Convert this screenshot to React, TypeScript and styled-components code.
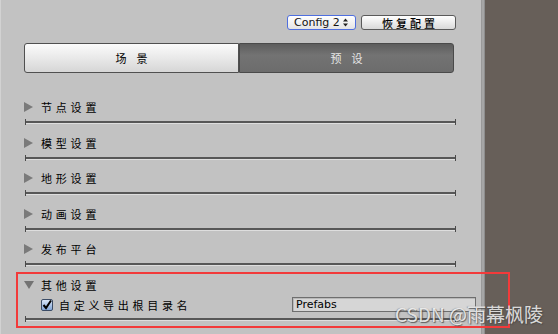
import styled, { createGlobalStyle } from 'styled-components'

const GlobalStyle = createGlobalStyle`
  html, body {
    margin: 0;
    padding: 0;
    width: 558px;
    height: 334px;
    overflow: hidden;
    background: #675f59;
  }
  * { box-sizing: border-box; }
`

const Page = styled.div`
  display: flex;
  width: 558px;
  height: 334px;
  font-family: 'Noto Sans CJK SC', 'DejaVu Sans', sans-serif;
  position: relative;
`

const Panel = styled.div`
  width: 481px;
  height: 100%;
  background: #c2c2c2;
  border-left: 1px solid #d2d2d2;
  display: flex;
  flex-direction: column;
  padding: 15px 27px 0 22px;
`

const Divider = styled.div`
  width: 4px;
  height: 100%;
  background: #a6a6a6;
  border-left: 1px solid #9a9a9a;
  border-right: 1px solid #8e8e8e;
`

const DarkSide = styled.div`
  flex: 1;
  background: #675f59;
`

const TopBar = styled.div`
  display: flex;
  justify-content: flex-end;
  gap: 5px;
  height: 15px;
  margin-right: -2px;
`

const Dropdown = styled.div`
  width: 69px;
  height: 15px;
  border: 1px solid #4f6fdf;
  border-radius: 3px;
  background: linear-gradient(#ffffff, #e4e4e4);
  display: flex;
  align-items: center;
  justify-content: space-between;
  padding: 0 7px 0 6px;
  font-family: 'DejaVu Sans', sans-serif;
  font-size: 11px;
  color: #111;
`

const Button = styled.div`
  width: 95px;
  height: 15px;
  border: 1px solid #5a5a5a;
  border-radius: 3px;
  background: linear-gradient(#ffffff, #d9d9d9);
  display: flex;
  align-items: center;
  justify-content: center;
  font-size: 11px;
  font-weight: 500;
  letter-spacing: 3px;
  padding-left: 3px;
  color: #000;
`

const Tabs = styled.div`
  display: flex;
  margin-top: 13px;
  height: 30px;
  margin-left: 1px;
`

const Tab = styled.div<{ $active?: boolean }>`
  flex: 1;
  display: flex;
  align-items: center;
  justify-content: center;
  font-size: 11px;
  letter-spacing: 10px;
  padding-left: 10px;
  border: 1px solid ${p => (p.$active ? '#4a4a4a' : '#505050')};
  background: ${p =>
    p.$active
      ? 'linear-gradient(#5d5d5d, #737373 40%, #6c6c6c)'
      : 'linear-gradient(#fbfbfb, #e9e9e9 50%, #d6d6d6)'};
  color: ${p => (p.$active ? '#e6e6e6' : '#000')};
  border-radius: ${p => (p.$active ? '0 3px 3px 0' : '3px 0 0 3px')};
`

const Sections = styled.div`
  display: flex;
  flex-direction: column;
  margin-top: 24px;
`

const Section = styled.div`
  display: flex;
  flex-direction: column;
  margin-bottom: 9.5px;
`

const Header = styled.div`
  display: flex;
  align-items: center;
  height: 20px;
  gap: 7px;
  margin-left: 1px;
  font-size: 11px;
  letter-spacing: 3.8px;
  color: #000;
`

const Triangle = styled.span<{ $open?: boolean }>`
  width: 0;
  height: 0;
  ${p =>
    p.$open
      ? `border-left: 5px solid transparent;
         border-right: 5px solid transparent;
         border-top: 8px solid #737373;
         margin-right: 0;`
      : `border-top: 5px solid transparent;
         border-bottom: 5px solid transparent;
         border-left: 9px solid #7a7a7a;
         margin-right: 1px;`}
`

const Line = styled.div`
  position: relative;
  margin-top: 4px;
  margin-left: 2px;
  width: 431px;
  height: 2px;
  background: #575757;
  box-shadow: 0 1px 0 #dedede;
  &::before, &::after {
    content: '';
    position: absolute;
    top: -2px;
    width: 1px;
    height: 6px;
    background: #4a4a4a;
  }
  &::before { left: 0; }
  &::after { right: 0; }
`

const OptionRow = styled.div`
  display: flex;
  align-items: center;
  height: 18px;
  margin-top: 1px;
  padding-left: 18px;
`

const OptionLabel = styled.span`
  flex: 1;
  margin-left: 6px;
  font-size: 11px;
  letter-spacing: 3.7px;
  color: #000;
`

const TextField = styled.div`
  width: 184px;
  height: 15px;
  margin-right: -22px;
  border: 1px solid #6e6e6e;
  background: #d6d6d6;
  box-shadow: inset 1px 1px 0 #b8b8b8;
  font-family: 'DejaVu Sans', sans-serif;
  font-size: 11px;
  padding: 0 3px;
  line-height: 13px;
  color: #000;
`

const Highlight = styled.div`
  position: absolute;
  left: 16px;
  top: 272px;
  width: 494px;
  height: 56px;
  border: 2px solid #f23a3a;
  pointer-events: none;
`

const Watermark = styled.div`
  position: absolute;
  left: 395px;
  top: 303px;
  font-family: 'Noto Sans CJK SC', 'DejaVu Sans', sans-serif;
  font-size: 19px;
  line-height: 22px;
  color: rgba(255, 255, 255, 0.8);
  text-shadow: 1px 1px 1px rgba(70, 70, 70, 0.8), -1px 0 1px rgba(70, 70, 70, 0.4);
  white-space: nowrap;
`

function UpDown() {
  return (
    <svg width="5" height="9" viewBox="0 0 5 9">
      <path d="M2.5 0.5 L5 3.5 L0 3.5 Z M0 5.5 L5 5.5 L2.5 8.5 Z" fill="#222" />
    </svg>
  )
}

function Checkbox() {
  return (
    <svg width="12" height="12" viewBox="0 0 12 12">
      <defs>
        <linearGradient id="cb" x1="0" y1="0" x2="0" y2="1">
          <stop offset="0" stopColor="#dce8f8" />
          <stop offset="1" stopColor="#7ea3d6" />
        </linearGradient>
      </defs>
      <rect x="0.5" y="0.5" width="11" height="11" rx="1.5" fill="url(#cb)" stroke="#3b4c66" />
      <path d="M2.5 6 L5 9 L10 1.5" fill="none" stroke="#000" strokeWidth="2" />
    </svg>
  )
}

const folded = ['节点设置', '模型设置', '地形设置', '动画设置', '发布平台']

export default function App() {
  return (
    <Page>
      <GlobalStyle />
      <Panel>
        <TopBar>
          <Dropdown>
            <span>Config 2</span>
            <UpDown />
          </Dropdown>
          <Button>恢复配置</Button>
        </TopBar>
        <Tabs>
          <Tab>场景</Tab>
          <Tab $active>预设</Tab>
        </Tabs>
        <Sections>
          {folded.map(name => (
            <Section key={name}>
              <Header>
                <Triangle />
                {name}
              </Header>
              <Line />
            </Section>
          ))}
          <Section>
            <Header>
              <Triangle $open />
              其他设置
            </Header>
            <OptionRow>
              <Checkbox />
              <OptionLabel>自定义导出根目录名</OptionLabel>
              <TextField>Prefabs</TextField>
            </OptionRow>
            <Line />
          </Section>
        </Sections>
      </Panel>
      <Divider />
      <DarkSide />
      <Highlight />
      <Watermark>CSDN @雨幕枫陵</Watermark>
    </Page>
  )
}
